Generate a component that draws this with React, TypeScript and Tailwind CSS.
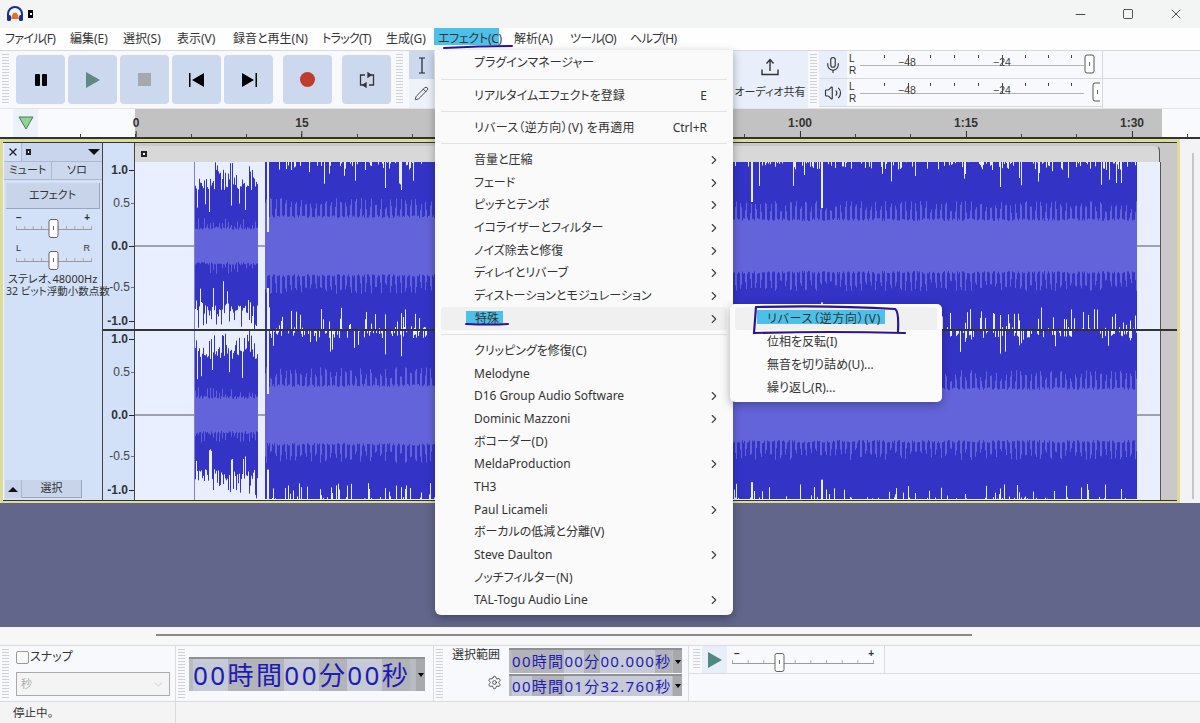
import { ChevronDown, ChevronRight, Mic, Minus, Pencil, Settings, Square, Volume2, X } from 'lucide-react';

const makeRng = (seed: number) => {
  let s = seed;
  return () => {
    s = (s * 1664525 + 1013904223) % 4294967296;
    return s / 4294967296;
  };
};

// relative to wave canvas (x=135 on the page)
const deepLines: Record<number, number> = { 132: 70, 133: 70, 616: 40, 617: 40, 686: 46, 687: 46, 865: 25, 884: 16, 830: 12, 780: 14, 250: 26, 266: 28 };

const buildWave = (height: number, center: number, seed: number, topEdge: number, bottomEdge: number) => {
  const r = makeRng(seed);
  let dark = '';
  let light = '';
  for (let x = 59; x < 1002; x++) {
    if (x >= 123 && x < 130) continue;
    let rmsUp: number;
    let rmsDown: number;
    let peakUp: number;
    let peakDown: number;
    if (x < 123) {
      rmsUp = 16 + (x % 3 === 0 ? r() * 12 : r() * 3);
      rmsDown = 16 + (x % 3 === 0 ? r() * 12 : r() * 3);
      peakUp = r() < 0.25 ? 68 + r() * 16 : r() < 0.08 ? 34 + r() * 12 : 56 + r() * 12;
      peakDown = r() < 0.25 ? 68 + r() * 16 : r() < 0.12 ? 32 + r() * 14 : 54 + r() * 14;
    } else {
      const comb = x % 5 < 2 ? 8 + r() * 12 : r() * 3;
      const base = x < 350 ? 28 : 25;
      rmsUp = base + comb;
      rmsDown = base + comb;
      const long = deepLines[x] ?? 0;
      const near = x < 345 || x > 840 ? 0.16 : 0.06;
      const topCut = r() < 0.25 ? r() * 8 : r() < 0.05 ? 8 + r() * 16 : 0;
      const botCut = r() < near ? 3 + r() * 20 : r() < 0.1 ? r() * 3 : 0;
      peakUp = 84 - Math.max(topCut * topEdge, long * topEdge);
      peakDown = 84 - Math.max(botCut * bottomEdge, long * bottomEdge * 0.6);
    }
    dark += `M${x + 0.5} ${center - peakUp}V${center + peakDown}`;
    light += `M${x + 0.5} ${center - Math.min(rmsUp, peakUp)}V${center + Math.min(rmsDown, peakDown)}`;
  }
  return { dark, light, height, center };
};

const Channel = ({ height, center, seed, topEdge, bottomEdge }: { height: number; center: number; seed: number; topEdge: number; bottomEdge: number }) => {
  const w = buildWave(height, center, seed, topEdge, bottomEdge);
  return (
    <svg width="1025" height={height} className="block">
      <rect width="1025" height={height} fill="#e9effe" />
      <path d={`M0 ${center}H59M123 ${center}H130M1001 ${center}H1025`} stroke="#555" strokeWidth="1" />
      <path d={w.dark} stroke="#3333c6" strokeWidth="1" />
      <path d={w.light} stroke="#6464da" strokeWidth="1" />
      <path d={`M59.5 0V${height}`} stroke="#8080cc" strokeWidth="1" />
    </svg>
  );
};

const Grip = ({ className = '' }: { className?: string }) => (
  <div className={`w-[7px] shrink-0 my-[3px] bg-[repeating-linear-gradient(to_bottom,#cfd1d6_0,#cfd1d6_1px,transparent_1px,transparent_3px)] ${className}`} />
);

const TransportButton = ({ children, className = '' }: { children: React.ReactNode; className?: string }) => (
  <div className={`w-[49px] h-[49px] rounded-[4px] bg-[#ccd8ee] flex items-center justify-center shrink-0 ${className}`}>{children}</div>
);

const MenuRow = ({ label, sub, shortcut, active }: { label: React.ReactNode; sub?: boolean; shortcut?: string; active?: boolean }) => (
  <div className={`h-[22.7px] mx-[6px] pl-[33px] pr-[6px] flex items-center justify-between rounded-[3px] ${active ? 'bg-[#f0f0f0]' : ''}`}>
    <span>{label}</span>
    {shortcut && <span className="mr-[14px]">{shortcut}</span>}
    {sub && <ChevronRight size={14} strokeWidth={2} className="text-[#444]" />}
  </div>
);

const MenuSep = () => (
  <div className="h-[9.5px] flex items-center px-[6px]">
    <div className="h-px w-full bg-[#e2e2e2]" />
  </div>
);

const Meter = ({ thumb }: { thumb: number }) => (
  <svg width="240" height="27" className="block">
    <path d="M0 14.5H224" stroke="#b4b4b4" />
    {[24, 70, 94, 118, 165, 188, 211].map((x) => (
      <path key={x} d={`M${x}.5 4V7`} stroke="#444" />
    ))}
    <path d="M48.5 4V14M142.5 4V14" stroke="#444" />
    <text x="38" y="15" fontSize="10.5" fill="#444" fontFamily="Liberation Sans">−48</text>
    <text x="133" y="15" fontSize="10.5" fill="#444" fontFamily="Liberation Sans">−24</text>
    <rect x={thumb} y="4" width="9" height="18" rx="2" fill="#fff" stroke="#555" />
    <path d={`M${thumb + 4.5} 11V15`} stroke="#666" />
  </svg>
);

const MeterRow = ({ icon, thumb }: { icon: React.ReactNode; thumb: number }) => (
  <div className="h-[28px] flex items-stretch border-b border-[#d8d8dc]">
    <div className="w-[28px] bg-[#e8eefa] flex items-center justify-center">{icon}</div>
    <div className="w-[13px] pl-[2px] flex flex-col justify-center text-[10px] leading-[12px] text-[#333] font-['Liberation_Sans',sans-serif]">
      <span>L</span>
      <span>R</span>
    </div>
    <Meter thumb={thumb} />
  </div>
);

const HSlider = ({ width, thumb }: { width: number; thumb: number }) => (
  <svg width={width} height="22" className="block">
    <path d={`M0 12.5H${width}`} stroke="#9a9a9a" />
    {Array.from({ length: 10 }).map((_, i) => (
      <path key={i} d={`M${(i * (width - 1)) / 9 + 0.5} 9V12`} stroke="#aaa" />
    ))}
    <rect x={thumb} y="2.5" width="9" height="18" rx="2" fill="#fff" stroke="#666" />
    <path d={`M${thumb + 4.5} 9V13`} stroke="#666" />
  </svg>
);

const AxisLabel = ({ text, mt, strong }: { text: string; mt: number; strong?: boolean }) => (
  <div className="h-[14px] flex items-center justify-end leading-[14px]" style={{ marginTop: mt }}>
    <span className={strong ? 'font-bold text-[#333]' : 'text-[#444]'}>{text}</span>
    <span className={`ml-[1px] h-px ${strong ? 'w-[5px] bg-[#222]' : 'w-[3px] bg-[#777]'}`} />
  </div>
);

const Axis = () => (
  <div className="text-[12px]">
    <AxisLabel text="1.0" mt={1} strong />
    <AxisLabel text="0.5" mt={19} />
    <AxisLabel text="0.0" mt={29} strong />
    <AxisLabel text="-0.5" mt={27} />
    <AxisLabel text="-1.0" mt={20} strong />
  </div>
);

const TimeField = ({ parts, small, className = '' }: { parts: [string, boolean][]; small?: boolean; className?: string }) => (
  <div className={`flex bg-[#b9bbc3] border-t-2 border-[#8f8f96] items-stretch ${className}`}>
    <div className={`flex items-stretch whitespace-nowrap ${small ? 'pl-[3px] text-[15px] tracking-[1.3px] w-[164px]' : 'pl-[4px] text-[26px] tracking-[2.4px] w-[227px]'} text-[#1c1cb4] leading-none`}>
      {parts.map(([t, dark], i) => (
        <span key={i} className={`flex items-center shrink-0 ${dark ? 'bg-[#b3b3ba]' : 'bg-[#c6c9d6]'}`}>{t}</span>
      ))}
    </div>
    <div className="w-[9px] bg-[#a9a9ad] flex items-center justify-center">
      <span className="w-0 h-0 border-l-[3px] border-r-[3px] border-t-[4px] border-l-transparent border-r-transparent border-t-black" />
    </div>
  </div>
);

export default function App() {
  const majors: [number, string][] = [[136, '0'], [302, '15'], [800, '1:00'], [966, '1:15'], [1132, '1:30']];
  const minors = Array.from({ length: 21 }).map((_, i) => 80 + i * 55.35);

  return (
    <div className="relative w-[1200px] h-[723px] overflow-hidden flex flex-col bg-[#f8f9fc] text-[12px] text-[#333] font-['Noto_Sans','Noto_Sans_CJK_JP',sans-serif] [font-feature-settings:'palt']">
      {/* title bar */}
      <div className="h-[28px] bg-[#f2f5f4] flex items-center pl-[6px] shrink-0">
        <svg width="18" height="18" viewBox="0 0 18 18">
          <path d="M2 12V9a7 7 0 0 1 14 0v3" fill="none" stroke="#1c2f8c" strokeWidth="2" />
          <rect x="1" y="10" width="4" height="6" rx="1.5" fill="#1c2f8c" />
          <rect x="13" y="10" width="4" height="6" rx="1.5" fill="#1c2f8c" />
          <path d="M5 14 Q7 6 9 8 Q11 6 13 14Z" fill="#e0702a" />
        </svg>
        <div className="ml-[4px] w-[5px] h-[8px] bg-black flex items-center justify-center">
          <div className="w-[2px] h-[2px] bg-white" />
        </div>
        <div className="ml-auto flex items-center text-[#222]">
          <div className="w-[48px] flex justify-center"><Minus size={15} strokeWidth={1.3} /></div>
          <div className="w-[48px] flex justify-center"><Square size={12} strokeWidth={1.5} /></div>
          <div className="w-[48px] flex justify-center"><X size={16} strokeWidth={1.2} /></div>
        </div>
      </div>

      {/* menu bar */}
      <div className="h-[22px] bg-[#fefefe] flex items-center shrink-0 pl-[5px]">
        <span className="w-[65px] tracking-[-0.7px]">ファイル(F)</span>
        <span className="w-[53px]">編集(E)</span>
        <span className="w-[54px]">選択(S)</span>
        <span className="w-[56px]">表示(V)</span>
        <span className="w-[89px]">録音と再生(N)</span>
        <span className="w-[64px] tracking-[-0.7px]">トラック(T)</span>
        <span className="w-[50px]">生成(G)</span>
        <span className="w-[78px] relative z-20 pl-[2px] tracking-[-0.3px]">
          <span className="absolute left-[-2px] top-[-2px] w-[65px] h-[17px] bg-[#4cc0e8] -z-10" />
          エフェクト(C)
        </span>
        <span className="w-[56px]">解析(A)</span>
        <span className="w-[60px] tracking-[-0.8px]">ツール(O)</span>
        <span className="tracking-[-0.7px]">ヘルプ(H)</span>
      </div>

      {/* main toolbar */}
      <div className="h-[58px] flex items-stretch border-t border-[#d8d8dc] shrink-0 bg-[#f8f9fc]">
        <Grip className="ml-[2px]" />
        <div className="flex items-center gap-[3px] pl-[7px]">
          <TransportButton>
            <div className="flex gap-[2px]"><div className="w-[5px] h-[12px] bg-black rounded-[1px]" /><div className="w-[5px] h-[12px] bg-black rounded-[1px]" /></div>
          </TransportButton>
          <TransportButton>
            <svg width="16" height="16"><path d="M1 0L15 8L1 16Z" fill="#5f8a82" /></svg>
          </TransportButton>
          <TransportButton>
            <div className="w-[13px] h-[13px] bg-[#a8a8ac]" />
          </TransportButton>
          <TransportButton>
            <svg width="16" height="14"><path d="M0 0h1.5v14H0zM15 0v14L3 7z" fill="#000" /></svg>
          </TransportButton>
          <TransportButton>
            <svg width="16" height="14"><path d="M14.5 0H16v14h-1.5zM1 0v14L13 7z" fill="#000" /></svg>
          </TransportButton>
          <TransportButton className="ml-[7px]">
            <div className="w-[15px] h-[15px] rounded-full bg-[#bd3c2e]" />
          </TransportButton>
          <TransportButton className="ml-[7px]">
            <svg width="16" height="16" fill="none" stroke="#333" strokeWidth="1.3">
              <path d="M6 3H1.5v10H5M10 13h4.5V3H11" />
              <path d="M9 1L12 3L9 5Z M7 11L4 13L7 15Z" fill="#333" />
            </svg>
          </TransportButton>
        </div>
        <Grip className="ml-[5px]" />
        <div className="ml-[6px] w-[25px] flex flex-col shrink-0">
          <div className="h-[28px] bg-[#ccd8ee] flex items-center justify-center text-[#222]">
            <svg width="10" height="17" fill="none" stroke="#222" strokeWidth="1.2"><path d="M2 1h6M5 1v15M2 16h6" /></svg>
          </div>
          <div className="flex-1 bg-[#eef2fb] flex items-center justify-center"><Pencil size={15} strokeWidth={1.4} className="text-[#333]" /></div>
        </div>
        <div className="w-[298px] shrink-0" />
        <div className="w-[76px] shrink-0 bg-[#e8eefa] flex flex-col items-center pt-[6px] text-[11px]">
          <svg width="20" height="20" fill="none" stroke="#333" strokeWidth="1.4">
            <path d="M10 14V3M6.5 6.5L10 2.5L13.5 6.5M2 12.5V17.5H18V12.5" />
          </svg>
          <span className="mt-[8px] leading-[14px] whitespace-nowrap">オーディオ共有</span>
        </div>
        <Grip className="mx-[2px]" />
        <div className="w-[283px] flex flex-col shrink-0">
          <MeterRow icon={<Mic size={18} strokeWidth={1.5} />} thumb={225} />
          <MeterRow icon={<Volume2 size={18} strokeWidth={1.5} />} thumb={233} />
        </div>
        <div className="flex-1 flex flex-col">
          <div className="h-[28px] border-b border-l border-[#d8d8dc]" />
          <div className="flex-1 border-l border-[#d8d8dc]" />
        </div>
      </div>

      {/* ruler */}
      <div className="relative h-[29px] shrink-0 flex bg-[#f9fafd] border-t border-[#e4e4e8] font-['Liberation_Sans',sans-serif]">
        <div className="ml-[13px] w-[25px] bg-[#edf1fa] flex items-center justify-center">
          <svg width="16" height="14"><path d="M1 1H15L8 13Z" fill="#8fd48f" stroke="#3f7f5f" /></svg>
        </div>
        <div className="ml-[97px] w-[1027px] bg-[#c2c2c2]" />
        {minors.map((x) => (
          <div key={x} className="absolute bottom-0 w-px h-[3px] bg-[#444]" style={{ left: x }} />
        ))}
        {majors.map(([x, t]) => (
          <div key={t} className="absolute bottom-0 flex flex-col items-center -translate-x-1/2" style={{ left: x }}>
            <span className="text-[12px] font-bold leading-[14px] text-[#333] mb-[1px]">{t}</span>
            <span className="w-px h-[6px] bg-[#333]" />
          </div>
        ))}
      </div>

      {/* track area */}
      <div className="h-[2px] bg-[#333] shrink-0" />
      <div className="flex shrink-0 bg-[#f3f3f5]">
        <div className="w-[1180px] h-[364px] border-[3px] border-b-[2px] border-[#dcdc98] shrink-0">
          <div className="h-full border-y border-[#333] flex">
            {/* track panel */}
            <div className="w-[99px] ml-px bg-[#d2e0f8] border-r border-[#444] flex flex-col shrink-0 relative">
              <div className="h-[19px] flex border-b border-[#aeb8cc]">
                <div className="w-[18px] flex items-center justify-center border-r border-[#aeb8cc]"><X size={12} strokeWidth={2.6} className="text-[#222]" /></div>
                <div className="flex-1 flex items-center pl-[4px] pr-[2px] bg-[#c9d5ec]">
                  <div className="w-[5px] h-[6px] bg-[#222] flex items-center justify-center"><div className="w-[1px] h-[2px] bg-white" /></div>
                  <div className="ml-auto w-0 h-0 border-l-[6px] border-r-[6px] border-t-[6px] border-l-transparent border-r-transparent border-t-[#111]" />
                </div>
              </div>
              <div className="h-[18px] flex text-[11px] border-b border-[#aeb8cc] bg-[#ccd8ee]">
                <div className="w-[48px] flex items-center justify-center border-r border-[#aeb8cc]">ミュート</div>
                <div className="flex-1 flex items-center justify-center">ソロ</div>
              </div>
              <div className="mt-[3px] mx-[2px] h-[26px] bg-[#c8d4ea] border-r border-b border-[#9aa6bc] flex items-center justify-center text-[11px]">エフェクト</div>
              <div className="mt-[4px] px-[12px] flex justify-between font-['Liberation_Sans',sans-serif] text-[10px] leading-[10px] font-bold"><span>−</span><span>+</span></div>
              <div className="mx-[12px] -mt-[6px]"><HSlider width={76} thumb={33} /></div>
              <div className="mt-[4px] px-[12px] flex justify-between font-['Liberation_Sans',sans-serif] text-[9px] leading-[10px]"><span>L</span><span>R</span></div>
              <div className="mx-[12px] -mt-[4px]"><HSlider width={76} thumb={33} /></div>
              <div className="mt-[1px] pl-[4px] text-[11px] leading-[13px] whitespace-nowrap">ステレオ、48000Hz</div>
              <div className="pl-[2px] text-[10.5px] leading-[13px] whitespace-nowrap relative z-10">32 ビット浮動小数点数</div>
              <div className="mt-auto mb-[2px] ml-[1px] h-[18px] flex">
                <div className="w-[17px] bg-[#c8d4ea] border-r border-[#aeb8cc] flex items-center justify-center">
                  <div className="w-0 h-0 border-l-[5px] border-r-[5px] border-b-[5px] border-l-transparent border-r-transparent border-b-[#111]" />
                </div>
                <div className="w-[60px] bg-[#c8d4ea] border-r border-b border-[#9aa6bc] flex items-center justify-center text-[11px]">選択</div>
              </div>
            </div>

            {/* vertical scale */}
            <div className="w-[32px] bg-[#d2e0f8] border-r border-[#444] flex flex-col shrink-0 font-['Liberation_Sans',sans-serif]">
              <div className="h-[19px] shrink-0" />
              <div className="h-[167px] shrink-0"><Axis /></div>
              <div className="h-[2px] bg-[#333] shrink-0" />
              <Axis />
            </div>

            {/* waves */}
            <div className="flex-1 flex flex-col bg-[#c9c9c9]">
              <div className="h-[19px] shrink-0 w-[1025px] bg-[#d8d8d8] rounded-tr-[8px] border-t-[3px] border-[#c9c9c9] border-r border-r-[#555] flex items-center pl-[6px]">
                <div className="w-[6px] h-[6px] bg-[#222] flex items-center justify-center"><div className="w-[2px] h-[2px] bg-white" /></div>
              </div>
              <div className="flex w-[1026px] border-r border-[#555]">
                <Channel height={167} center={84} seed={11} topEdge={1} bottomEdge={1} />
              </div>
              <div className="h-[2px] bg-[#333] shrink-0" />
              <div className="flex w-[1026px] border-r border-[#555]">
                <Channel height={169} center={84} seed={47} topEdge={0.9} bottomEdge={0.7} />
              </div>
            </div>
          </div>
        </div>
        <div className="flex-1 flex justify-center pt-[14px] pb-[4px] pl-[5px]">
          <div className="w-[2px] bg-[#c6c6c6]" />
        </div>
      </div>

      {/* empty project area */}
      <div className="flex-1 bg-[#62668a]" />

      {/* horizontal scroller */}
      <div className="h-[18px] shrink-0 bg-[#f7f7f8] flex items-start pt-[7px] pl-[156px]">
        <div className="w-[816px] h-[2px] bg-[#8b8b8b]" />
      </div>

      {/* bottom toolbar */}
      <div className="h-[57px] shrink-0 flex items-stretch border-y border-[#dcdcdf] bg-[#f8f9fc]">
        <Grip className="ml-[2px]" />
        <div className="w-[167px] border-r border-[#dcdcdf] pl-[7px] shrink-0">
          <div className="flex items-center h-[22px] text-[12px]">
            <div className="w-[13px] h-[13px] border border-[#999] rounded-[2px] bg-[#f8f8f8] mr-[1px]" />
            スナップ
          </div>
          <div className="mt-[4px] w-[154px] h-[24px] border border-[#aaa] bg-[#f4f4f4] flex items-center justify-between pl-[4px] pr-[4px] text-[11px] text-[#aaa]">
            <span>秒</span>
            <ChevronDown size={13} strokeWidth={1.2} className="text-[#bbb]" />
          </div>
        </div>
        <Grip className="ml-[2px]" />
        <div className="pl-[4px] w-[249px] border-r border-[#dcdcdf] flex items-center shrink-0">
          <TimeField className="h-[34px]" parts={[['00', false], ['時間', true], ['00', false], ['分', true], ['00', false], ['秒', true]]} />
        </div>
        <Grip className="ml-[2px]" />
        <div className="w-[246px] border-r border-[#dcdcdf] flex shrink-0">
          <div className="w-[66px] pl-[9px] pt-[1px] flex flex-col">
            <span className="leading-[16px] whitespace-nowrap">選択範囲</span>
            <div className="self-end mr-[7px] mt-[12px]"><Settings size={15} strokeWidth={1.3} /></div>
          </div>
          <div className="flex flex-col gap-[1px] pt-[2px]">
            <TimeField small className="h-[25px]" parts={[['00', true], ['時間', true], ['00', false], ['分', true], ['00.000', false], ['秒', true]]} />
            <TimeField small className="h-[22px]" parts={[['00', false], ['時間', true], ['01 ', false], ['分', false], ['32.760', false], ['秒', false]]} />
          </div>
        </div>
        <div className="flex-1 flex flex-col">
          <div className="h-[28px] flex border-b border-[#dcdcdf]">
            <Grip className="ml-[4px]" />
            <div className="ml-[2px] w-[25px] bg-[#e8eefa] flex items-center justify-center">
              <svg width="16" height="16"><path d="M1 0L15 8L1 16Z" fill="#4f8a80" /></svg>
            </div>
            <div className="ml-[5px] w-[144px] relative">
              <div className="flex justify-between px-[2px] text-[10px] leading-[10px] font-bold font-['Liberation_Sans',sans-serif] mt-[3px]"><span>−</span><span>+</span></div>
              <div className="absolute left-0 top-[5px]"><HSlider width={142} thumb={43} /></div>
            </div>
            <div className="ml-[8px] border-l border-[#dcdcdf] flex-1" />
          </div>
        </div>
      </div>

      {/* status bar */}
      <div className="h-[21px] shrink-0 flex bg-[#f4f4f5] text-[11.5px]">
        <div className="w-[176px] pl-[13px] flex items-center border-r border-[#dcdcdf]">停止中。</div>
      </div>

      {/* effect menu */}
      <div className="absolute left-[435px] top-[50px] w-[298px] h-[565px] bg-[#fafafa] rounded-b-[6px] shadow-[0_3px_10px_rgba(0,0,0,0.3)] pt-[2px] z-10">
        <MenuRow label="プラグインマネージャー" />
        <MenuSep />
        <MenuRow label="リアルタイムエフェクトを登録" shortcut="E" />
        <MenuSep />
        <MenuRow label={<span className="tracking-[0.3px]">リバース（逆方向）(V) を再適用</span>} shortcut="Ctrl+R" />
        <MenuSep />
        <MenuRow label="音量と圧縮" sub />
        <MenuRow label="フェード" sub />
        <MenuRow label="ピッチとテンポ" sub />
        <MenuRow label="イコライザーとフィルター" sub />
        <MenuRow label="ノイズ除去と修復" sub />
        <MenuRow label="ディレイとリバーブ" sub />
        <MenuRow label="ディストーションとモジュレーション" sub />
        <MenuRow active sub label={<span className="relative z-0 inline-block px-[1px]"><span className="absolute left-[-8px] right-[-3px] top-[1px] bottom-[3px] bg-[#4cc0e8] -z-10" />特殊</span>} />
        <MenuSep />
        <MenuRow label="クリッピングを修復(C)" />
        <MenuRow label="Melodyne" />
        <MenuRow label="D16 Group Audio Software" sub />
        <MenuRow label="Dominic Mazzoni" sub />
        <MenuRow label="ボコーダー(D)" />
        <MenuRow label="MeldaProduction" sub />
        <MenuRow label="TH3" />
        <MenuRow label="Paul Licameli" sub />
        <MenuRow label="ボーカルの低減と分離(V)" />
        <MenuRow label="Steve Daulton" sub />
        <MenuRow label="ノッチフィルター(N)" />
        <MenuRow label="TAL-Togu Audio Line" sub />
      </div>

      {/* special submenu */}
      <div className="absolute left-[730px] top-[304px] w-[212px] h-[98px] bg-[#fbfbfb] rounded-[5px] shadow-[0_3px_10px_rgba(0,0,0,0.3)] pt-[3px] px-[5px] z-20">
        <div className="h-[23px] rounded-[3px] bg-[#f0f0f0] pl-[32px] flex items-center">
          <span className="relative z-0 tracking-[0.7px]">
            <span className="absolute left-[-10px] right-[-4px] top-0 bottom-[4px] bg-[#4cc0e8] -z-10" />
            リバース（逆方向）(V)
          </span>
        </div>
        <div className="h-[23px] pl-[32px] flex items-center">位相を反転(I)</div>
        <div className="h-[23px] pl-[32px] flex items-center">無音を切り詰め(U)...</div>
        <div className="h-[23px] pl-[32px] flex items-center">繰り返し(R)...</div>
      </div>

      {/* hand-drawn marks */}
      <svg width="1200" height="723" className="absolute left-0 top-0 z-30 pointer-events-none" fill="none" stroke="#2b1590" strokeLinecap="round">
        <path d="M444 48Q480 46 512 46" strokeWidth="2" />
        <path d="M466 324Q490 325 508 324" strokeWidth="2" />
        <path d="M756 307Q830 305 895 309Q899 311 898 331M756 307L754 333Q830 331 905 333" strokeWidth="2.2" />
      </svg>
    </div>
  );
}
